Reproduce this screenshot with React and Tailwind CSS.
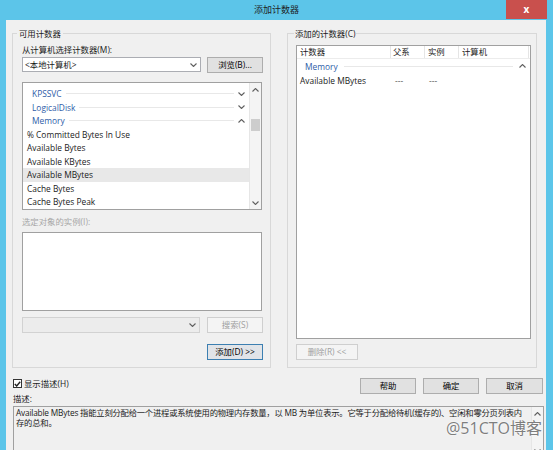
import React from "react";

const FONT = "font-['Open_Sans','Noto_Sans_CJK_SC',sans-serif]";

function Chev({ up }) {
  return (
    <svg width="7" height="4" viewBox="0 0 7 4" className="shrink-0">
      <polyline
        points={up ? "0.5,3.5 3.5,0.5 6.5,3.5" : "0.5,0.5 3.5,3.5 6.5,0.5"}
        fill="none"
        stroke="#606060"
        strokeWidth="1.1"
      />
    </svg>
  );
}

function Btn({ children, disabled, primary, className = "" }) {
  const look = disabled
    ? "border-[#cfcfcf] bg-[#f4f4f4] text-[#a0a0a0]"
    : primary
    ? "border-[#3c7fb1] bg-[#e1e4e8] text-black"
    : "border-[#adadad] bg-[#e1e1e1] text-black";
  return (
    <div className={`flex h-[16px] w-[56px] items-center justify-center border leading-none ${look} ${className}`}>
      {children}
    </div>
  );
}

function ScrollBar({ thumbTop, thumbHeight }) {
  return (
    <div className="flex w-[12px] flex-col border-l border-[#e6e6e6] bg-[#f4f4f4]">
      <div className="flex h-[13px] items-center justify-center">
        <Chev up />
      </div>
      <div className="flex-1">
        {thumbHeight ? (
          <div className="mx-[1px] bg-[#cdcdcd]" style={{ marginTop: thumbTop, height: thumbHeight }} />
        ) : null}
      </div>
      <div className="flex h-[13px] items-center justify-center">
        <Chev />
      </div>
    </div>
  );
}

function Category({ name, up }) {
  return (
    <div className="flex h-[13.5px] items-center pl-[9px] pr-[4px]">
      <span className="text-[#2d5ca8]">{name}</span>
      <span className="mx-[4px] h-px flex-1 bg-[#e8e8e8]" />
      <Chev up={up} />
    </div>
  );
}

function Item({ name, selected }) {
  return (
    <div className={`flex h-[13.5px] items-center pl-[4px] ${selected ? "bg-[#e8e8e8]" : ""}`}>{name}</div>
  );
}

export default function App() {
  return (
    <div className={`flex h-[450px] w-[553px] flex-col overflow-hidden bg-[#5cc5e9] text-[8.4px] leading-[11px] text-[#1a1a1a] ${FONT}`}>
      {/* title bar */}
      <div className="flex h-[20px] shrink-0 items-start">
        <div className="w-[47px]" />
        <div className="flex h-[19px] flex-1 items-center justify-center text-[9px] text-[#1f1f1f]">添加计数器</div>
        <div className="flex h-[19px] w-[41px] items-center justify-center bg-[#c9504d] text-[10px] font-bold text-white">x</div>
        <div className="w-[6px]" />
      </div>

      {/* body */}
      <div className="mx-[6px] mr-[7px] flex flex-1 flex-col bg-[#f0f0f0]">
        <div className="ml-[6px] mt-[8px] flex gap-[16px]">
          {/* left group */}
          <fieldset className="flex w-[259px] flex-col border border-[#d8d8d8] pb-[7px] pl-[9px] pr-[7px] pt-[5px]">
            <legend className="-ml-[5px] px-[2px] leading-[11px]">可用计数器</legend>
            <div className="h-[11px]">从计算机选择计数器(M):</div>
            <div className="mt-[2px] flex h-[15px] gap-[6px]">
              <div className="flex w-[179px] items-center justify-between border border-[#abadb3] bg-white pl-[2px] pr-[3px]">
                <span>&lt;本地计算机&gt;</span>
                <Chev />
              </div>
              <Btn className="h-[15px]">浏览(B)...</Btn>
            </div>
            <div className="mt-[10px] flex h-[128px] w-[240px] border border-[#a0a0a0] bg-white">
              <div className="flex-1 overflow-hidden pt-[4px]">
                <Category name="KPSSVC" />
                <Category name="LogicalDisk" />
                <Category name="Memory" up />
                <Item name="% Committed Bytes In Use" />
                <Item name="Available Bytes" />
                <Item name="Available KBytes" />
                <Item name="Available MBytes" selected />
                <Item name="Cache Bytes" />
                <Item name="Cache Bytes Peak" />
              </div>
              <ScrollBar thumbTop={23} thumbHeight={12} />
            </div>
            <div className="mt-[6px] h-[11px] text-[#a6a6a6]">选定对象的实例(I):</div>
            <div className="mt-[5px] h-[79px] w-[240px] border border-[#a0a0a0] bg-white" />
            <div className="mt-[6px] flex h-[16px] gap-[7px]">
              <div className="flex w-[178px] items-center justify-end border border-[#d2d2d2] bg-[#ececec] pr-[3px]">
                <Chev />
              </div>
              <Btn disabled>搜索(S)</Btn>
            </div>
            <div className="mt-[11px] flex justify-end">
              <Btn primary>添加(D) &gt;&gt;</Btn>
            </div>
          </fieldset>

          {/* right group */}
          <fieldset className="flex w-[250px] flex-col border border-[#d8d8d8] pb-[7px] pl-[8px] pr-[5px] pt-[6px]">
            <legend className="-ml-[2px] px-[1px] leading-[11px]">添加的计数器(C)</legend>
            <div className="flex flex-1 flex-col border border-[#a0a0a0] bg-white">
              <div className="flex h-[13px] border-b border-[#ececec]">
                <div className="w-[94px] border-r border-[#e5e5e5] pl-[3px]">计数器</div>
                <div className="w-[34px] border-r border-[#e5e5e5] pl-[2px]">父系</div>
                <div className="w-[34px] border-r border-[#e5e5e5] pl-[3px]">实例</div>
                <div className="w-[70px] border-r border-[#e5e5e5] pl-[3px]">计算机</div>
              </div>
              <div className="flex h-[14px] items-center pl-[8px] pr-[4px]">
                <span className="text-[#2d5ca8]">Memory</span>
                <span className="mx-[6px] h-px flex-1 bg-[#e8e8e8]" />
                <Chev up />
              </div>
              <div className="flex h-[15px] items-center">
                <div className="w-[94px] pl-[3px]">Available MBytes</div>
                <div className="w-[34px] pl-[4px] text-[#555]">---</div>
                <div className="w-[34px] pl-[4px] text-[#555]">---</div>
              </div>
            </div>
            <div className="mt-[5px] flex">
              <Btn disabled className="w-[62px]">删除(R) &lt;&lt;</Btn>
            </div>
          </fieldset>
        </div>

        {/* options row */}
        <div className="ml-[7px] mr-[3px] mt-[10px] flex justify-between">
          <div className="flex flex-col">
            <div className="flex h-[11px] items-center gap-[2px]">
              <div className="flex h-[9px] w-[9px] items-center justify-center border border-[#333] bg-white">
                <svg width="7" height="6" viewBox="0 0 7 6">
                  <polyline points="0.8,3 2.7,5 6.2,0.8" fill="none" stroke="#222" strokeWidth="1.4" />
                </svg>
              </div>
              <span>显示描述(H)</span>
            </div>
            <div className="mt-[4px] h-[11px]">描述:</div>
          </div>
          <div className="flex gap-[7px]">
            <Btn>帮助</Btn>
            <Btn>确定</Btn>
            <Btn className="w-[57px]">取消</Btn>
          </div>
        </div>

        {/* description */}
        <div className="relative ml-[7px] mr-[2px] mt-[2px] flex h-[52px] shrink-0 border border-[#a0a0a0] bg-[#f0f0f0]">
          <div className="flex-1 overflow-hidden whitespace-nowrap pl-[2px] pt-[1px] text-[8.3px] leading-[10px] tracking-[-0.2px]">
            <div>Available MBytes 指能立刻分配给一个进程或系统使用的物理内存数量，以 MB 为单位表示。它等于分配给待机(缓存的)、空闲和零分页列表内</div>
            <div>存的总和。</div>
          </div>
          <ScrollBar />
          <div className="absolute right-[1px] top-[11px] text-[16px] leading-[20px] text-[#7e7e7e] [text-shadow:0_0_2px_#ffffff,0_0_1px_#ffffff]">
            @51CTO博客
          </div>
        </div>
      </div>
    </div>
  );
}
